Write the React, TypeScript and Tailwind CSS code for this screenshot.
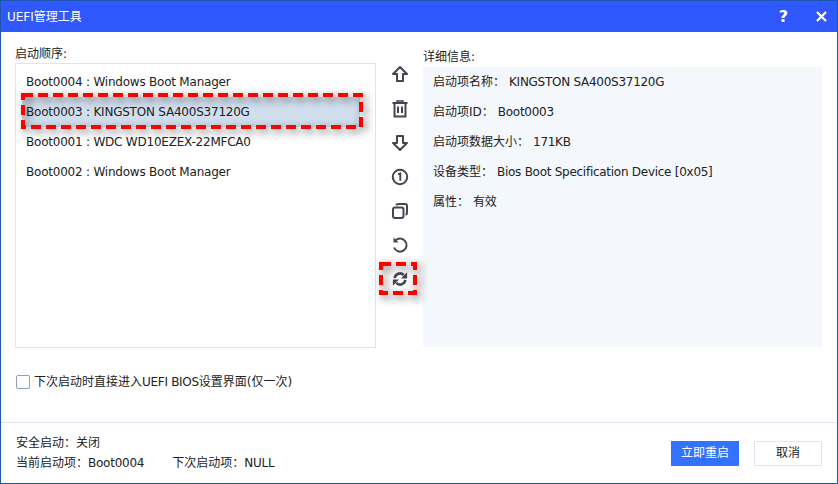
const font = { fontFamily: '"DejaVu Sans", "Noto Sans CJK SC", sans-serif' };

const bootItems = [
  "Boot0004 : Windows Boot Manager",
  "Boot0003 : KINGSTON SA400S37120G",
  "Boot0001 : WDC WD10EZEX-22MFCA0",
  "Boot0002 : Windows Boot Manager",
];

const details = [
  ["启动项名称\uFF1A", "KINGSTON SA400S37120G"],
  ["启动项ID\uFF1A", "Boot0003"],
  ["启动项数据大小\uFF1A", "171KB"],
  ["设备类型\uFF1A", "Bios Boot Specification Device [0x05]"],
  ["属性\uFF1A", "有效"],
];

const ink = "#414750";

function UpIcon() {
  return (
    <svg width="18" height="18" viewBox="0 0 18 18" fill="none" stroke={ink} strokeWidth="2" strokeLinejoin="round">
      <path d="M9 2 L16 9 H12 V16 H6 V9 H2 Z" />
    </svg>
  );
}

function DownIcon() {
  return (
    <svg width="18" height="18" viewBox="0 0 18 18" fill="none" stroke={ink} strokeWidth="2" strokeLinejoin="round">
      <path d="M9 16 L16 9 H12 V2 H6 V9 H2 Z" />
    </svg>
  );
}

function TrashIcon() {
  return (
    <svg width="18" height="18" viewBox="0 0 18 18" fill="none" stroke={ink} strokeWidth="2">
      <path d="M1.5 3 H16.5" />
      <path d="M6 2.5 V1 H12 V2.5" strokeWidth="1.5" />
      <path d="M3.5 3 V16.5 H14.5 V3" />
      <path d="M7 6.5 V13 M11 6.5 V13" />
    </svg>
  );
}

function InfoIcon() {
  return (
    <svg width="18" height="18" viewBox="0 0 18 18" fill="none" stroke={ink} strokeWidth="2">
      <circle cx="9" cy="9" r="7.2" />
      <path d="M7 6.4 L9.3 5.4 V12.8" strokeWidth="1.9" />
    </svg>
  );
}

function CopyIcon() {
  return (
    <svg width="18" height="18" viewBox="0 0 18 18" fill="none" stroke={ink} strokeWidth="2" strokeLinejoin="round">
      <rect x="2" y="5.5" width="10.5" height="10.5" rx="2" />
      <path d="M5.5 3.5 Q5.5 2 7.5 2 H14 Q16 2 16 4 V10.5 Q16 12.5 14.5 12.5" />
    </svg>
  );
}

function RestoreIcon() {
  return (
    <svg width="18" height="18" viewBox="0 0 18 18" fill="none" stroke={ink} strokeWidth="2">
      <path d="M4 5 A6.5 6.5 0 1 1 3 11.5" />
      <path d="M2.5 1.5 L2.5 6.5 L7.5 6.5 Z" fill={ink} stroke="none" />
    </svg>
  );
}

function SyncIcon() {
  return (
    <svg width="16" height="16" viewBox="0 0 18 18" fill="none" stroke={ink} strokeWidth="3">
      <path d="M3 8 A6 6 0 0 1 13.2 4.6" />
      <path d="M15 10 A6 6 0 0 1 4.8 13.4" />
      <path d="M17 1.5 V8.5 H10 Z" fill={ink} stroke="none" />
      <path d="M1 16.5 V9.5 H8 Z" fill={ink} stroke="none" />
    </svg>
  );
}

const actions = [UpIcon, TrashIcon, DownIcon, InfoIcon, CopyIcon, RestoreIcon, SyncIcon];

// dashed callout drawn over the list row / the refresh button
function Callout({ className, width, height }: { className: string; width: number; height: number }) {
  return (
    <svg
      className={`absolute drop-shadow-[3px_3px_4px_rgba(0,0,0,0.65)] ${className}`}
      width={width}
      height={height}
      fill="none"
    >
      <rect
        x="2"
        y="2"
        width={width - 4}
        height={height - 4}
        stroke="#f00"
        strokeWidth="4"
        strokeDasharray="10 5"
      />
    </svg>
  );
}

export default function App() {
  return (
    <div
      className="flex h-[484px] w-[838px] flex-col overflow-hidden border border-[#1c56ad] bg-white text-[12px] text-[#222]"
      style={font}
    >
      {/* 标题栏 */}
      <div className="flex h-[31px] shrink-0 items-center justify-between bg-[#2f58ff] pl-[6px] pr-[10px] text-white">
        <span>UEFI管理工具</span>
        <div className="flex items-center gap-[28px]">
          <span className="text-[16px] font-bold">?</span>
          <svg width="11" height="11" viewBox="0 0 11 11" stroke="white" strokeWidth="2.2">
            <path d="M1 1 L10 10 M10 1 L1 10" />
          </svg>
        </div>
      </div>

      <div className="relative flex h-[390px] shrink-0 px-[14px] pt-[12px]">
        {/* 启动顺序 */}
        <div className="flex w-[361px] shrink-0 flex-col">
          <div className="h-[19px] leading-[20px]">启动顺序:</div>
          <div className="h-[285px] border border-[#dfe5f0] pt-[3px]">
            {bootItems.map((item, i) => (
              <div
                key={item}
                className={`ml-[6px] flex h-[30px] w-[338px] items-center pl-[4px] tracking-[-0.22px] ${i === 1 ? "bg-[#d1deed]" : ""}`}
              >
                {item}
              </div>
            ))}
          </div>
          <label className="mt-[25px] flex items-center gap-[4px] pl-[1px]">
            <span className="h-[14px] w-[14px] rounded-[2px] border border-[#8f9db5] bg-white" />
            <span>
              下次启动时直接进入<span className="tracking-[-0.3px]">UEFI BIOS</span>设置界面(仅一次)
            </span>
          </label>
        </div>

        {/* 操作按钮 */}
        <div className="flex w-[47px] shrink-0 flex-col items-center pt-[14px]">
          {actions.map((Icon, i) => (
            <div key={i} className={`flex h-[34px] items-center justify-center ${i === 0 ? "pb-[2px]" : ""}`}>
              <Icon />
            </div>
          ))}
        </div>

        {/* 详细信息 */}
        <div className="flex w-[399px] shrink-0 flex-col">
          <div className="h-[23px] pt-[4px] leading-[18px]">详细信息:</div>
          <div className="h-[280px] bg-[#f4f7fc] pl-[10px]">
            {details.map(([label, value]) => (
              <div key={label} className="flex h-[30px] items-center gap-[4px]">
                <span>{label}</span>
                <span className="tracking-[-0.27px]">{value}</span>
              </div>
            ))}
          </div>
        </div>

        <Callout className="left-[20px] top-[61px]" width={342} height={36} />
        <Callout className="left-[378px] top-[230px]" width={38} height={33} />
      </div>

      {/* 底部 */}
      <div className="flex flex-1 items-center justify-between border-t border-[#dfe5f0] pl-[15px] pr-[15px]">
        <div className="flex flex-col gap-[2px] leading-[18px]">
          <div>安全启动{"\uFF1A"}关闭</div>
          <div className="flex gap-[28px]">
            <span>
              当前启动项{"\uFF1A"}<span className="tracking-[-0.25px]">Boot0004</span>
            </span>
            <span>
              下次启动项{"\uFF1A"}<span className="tracking-[-0.25px]">NULL</span>
            </span>
          </div>
        </div>
        <div className="flex gap-[15px]">
          <button className="h-[25px] w-[68px] bg-[#3371ff] text-white">立即重启</button>
          <button className="h-[25px] w-[68px] border border-[#dfe5f0] bg-white">取消</button>
        </div>
      </div>
    </div>
  );
}
